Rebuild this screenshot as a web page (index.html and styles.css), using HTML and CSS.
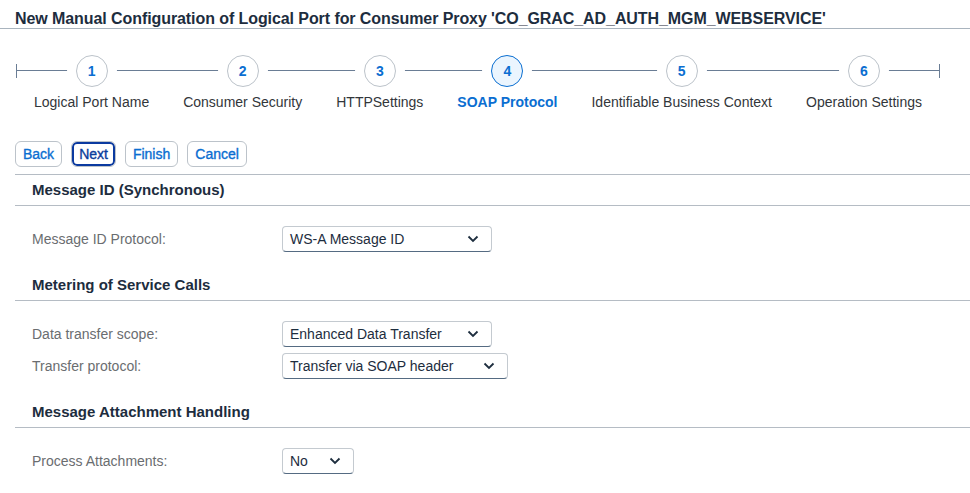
FILE: index.html
```html
<!DOCTYPE html>
<html lang="en">
<head>
<meta charset="UTF-8">
<title>New Manual Configuration of Logical Port</title>
<link rel="stylesheet" href="styles.css">
</head>
<body>
<div class="header">
    <h1>New Manual Configuration of Logical Port for Consumer Proxy 'CO_GRAC_AD_AUTH_MGM_WEBSERVICE'</h1>
</div>

<div class="stepper">
    <div class="step"><span class="num">1</span><span class="label">Logical Port Name</span></div>
    <div class="step"><span class="num">2</span><span class="label">Consumer Security</span></div>
    <div class="step"><span class="num">3</span><span class="label">HTTPSettings</span></div>
    <div class="step active"><span class="num">4</span><span class="label">SOAP Protocol</span></div>
    <div class="step"><span class="num">5</span><span class="label">Identifiable Business Context</span></div>
    <div class="step"><span class="num">6</span><span class="label">Operation Settings</span></div>
</div>

<div class="toolbar">
    <button>Back</button>
    <button class="focus">Next</button>
    <button>Finish</button>
    <button>Cancel</button>
</div>

<div class="content">
    <div class="section-title">Message ID (Synchronous)</div>
    <div class="rows">
        <div class="row">
            <label>Message ID Protocol:</label>
            <div class="select w210"><span>WS-A Message ID</span>
                <svg width="12" height="8" viewBox="0 0 12 8"><path d="M1.5 1.5 L6 6 L10.5 1.5" fill="none" stroke="#1d2d3e" stroke-width="1.8"/></svg>
            </div>
        </div>
    </div>

    <div class="section-title">Metering of Service Calls</div>
    <div class="rows">
        <div class="row">
            <label>Data transfer scope:</label>
            <div class="select w210"><span>Enhanced Data Transfer</span>
                <svg width="12" height="8" viewBox="0 0 12 8"><path d="M1.5 1.5 L6 6 L10.5 1.5" fill="none" stroke="#1d2d3e" stroke-width="1.8"/></svg>
            </div>
        </div>
        <div class="row">
            <label>Transfer protocol:</label>
            <div class="select w226"><span>Transfer via SOAP header</span>
                <svg width="12" height="8" viewBox="0 0 12 8"><path d="M1.5 1.5 L6 6 L10.5 1.5" fill="none" stroke="#1d2d3e" stroke-width="1.8"/></svg>
            </div>
        </div>
    </div>

    <div class="section-title">Message Attachment Handling</div>
    <div class="rows">
        <div class="row">
            <label>Process Attachments:</label>
            <div class="select w72"><span>No</span>
                <svg width="12" height="8" viewBox="0 0 12 8"><path d="M1.5 1.5 L6 6 L10.5 1.5" fill="none" stroke="#1d2d3e" stroke-width="1.8"/></svg>
            </div>
        </div>
    </div>
</div>
</body>
</html>
```

FILE: styles.css
```css
body { font-family: "Liberation Sans", Arial, sans-serif; font-size: 14px; color: #32363a; background: #fff; margin: 0; }
.header { height: 28px; border-bottom: 1px solid #a9b4be; padding: 0 15px; }
h1 { margin: 0; padding-top: 9px; font-size: 16px; line-height: 20px; font-weight: bold; color: #1d2d3e; letter-spacing: -0.08px; }

.stepper { position: relative; display: flex; justify-content: space-between; width: 888px; margin: 26px 0 0 16px; padding: 0 18px; }
.stepper::before { content: ""; position: absolute; left: 0; right: 0; top: 15px; border-top: 1px solid #6a7d95; }
.stepper::after { content: ""; position: absolute; left: 0; right: 0; top: 9px; height: 14px; border-left: 1px solid #6a7d95; border-right: 1px solid #6a7d95; }
.step { position: relative; display: flex; flex-direction: column; align-items: center; }
.num { width: 30px; height: 30px; border: 1px solid #bcc3ca; border-radius: 50%; background: #fff; box-shadow: 0 0 0 9px #fff; color: #0a6ed1; font-weight: bold; display: flex; align-items: center; justify-content: center; }
.label { margin-top: 6px; line-height: 18px; white-space: nowrap; }
.step.active .num { border-color: #0a6ed1; background: #ebf5fe; }
.step.active .label { color: #0a6ed1; font-weight: bold; }

.toolbar { display: flex; gap: 9px; margin: 30px 0 0 15px; }
button { height: 26px; padding: 0 7px; font-family: inherit; font-size: 14px; font-weight: normal; -webkit-text-stroke: 0.35px #0a6ed1; color: #0a6ed1; background: #fff; border: 1px solid #bcc3ca; border-radius: 6px; }
button.focus { color: #0a3d9c; -webkit-text-stroke-color: #0a3d9c; box-shadow: inset 0 0 0 2px #0b3aa0; }

.content { margin: 7px 0 0 15px; border-top: 1px solid #b5bcc4; }
.section-title { padding: 5px 17px 5px; line-height: 20px; font-size: 15px; font-weight: bold; color: #1d2d3e; border-bottom: 1px solid #b5bcc4; }
.rows { display: flex; flex-direction: column; gap: 6px; padding: 20px 0 18px 17px; }
.row { display: flex; align-items: center; }
.row label { width: 250px; color: #6a6d70; }
.select { display: flex; align-items: center; justify-content: space-between; padding: 0 12px 0 7px; box-sizing: border-box; height: 26px; border: 1px solid #c4cad0; border-bottom-color: #556b82; border-radius: 4px; background: #fff; color: #1d2d3e; }
.w210 { width: 210px; }
.w226 { width: 226px; }
.w72 { width: 72px; }
```
